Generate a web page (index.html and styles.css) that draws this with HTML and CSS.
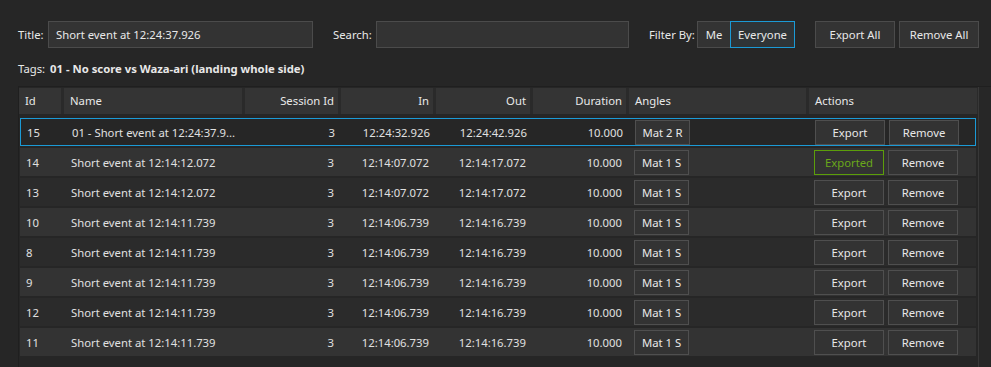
FILE: index.html
```html
<!DOCTYPE html>
<html lang="en">
<head>
    <meta charset="UTF-8">
    <meta name="viewport" content="width=device-width, initial-scale=1.0">
    <title>Events</title>
    <link rel="stylesheet" href="styles.css">
</head>
<body>
    <div class="toolbar">
        <label class="field-label title-label">Title:</label>
        <div class="text-box title-box">Short event at 12:24:37.926</div>
        <label class="field-label search-label">Search:</label>
        <div class="text-box search-box"></div>
        <label class="field-label filter-label">Filter By:</label>
        <div class="toggle">
            <button class="toggle-btn me-btn">Me</button>
            <button class="toggle-btn everyone-btn active">Everyone</button>
        </div>
        <button class="bar-btn export-all">Export All</button>
        <button class="bar-btn remove-all">Remove All</button>
    </div>

    <div class="tags">Tags: <b>01 - No score vs Waza-ari (landing whole side)</b></div>

    <div class="grid">
        <div class="grid-main">
            <div class="grid-row header">
                <div class="cell">Id</div>
                <div class="cell">Name</div>
                <div class="cell right">Session Id</div>
                <div class="cell right">In</div>
                <div class="cell right">Out</div>
                <div class="cell right">Duration</div>
                <div class="cell">Angles</div>
                <div class="cell">Actions</div>
            </div>

            <div class="grid-row item selected">
                <div class="cell">15</div>
                <div class="cell">01 - Short event at 12:24:37.9...</div>
                <div class="cell right">3</div>
                <div class="cell right">12:24:32.926</div>
                <div class="cell right">12:24:42.926</div>
                <div class="cell right">10.000</div>
                <div class="cell"><button class="angle-btn">Mat 2 R</button></div>
                <div class="cell actions"><button class="row-btn">Export</button><button class="row-btn">Remove</button></div>
            </div>
            <div class="grid-row item alt">
                <div class="cell">14</div>
                <div class="cell">Short event at 12:14:12.072</div>
                <div class="cell right">3</div>
                <div class="cell right">12:14:07.072</div>
                <div class="cell right">12:14:17.072</div>
                <div class="cell right">10.000</div>
                <div class="cell"><button class="angle-btn">Mat 1 S</button></div>
                <div class="cell actions"><button class="row-btn exported">Exported</button><button class="row-btn">Remove</button></div>
            </div>
            <div class="grid-row item">
                <div class="cell">13</div>
                <div class="cell">Short event at 12:14:12.072</div>
                <div class="cell right">3</div>
                <div class="cell right">12:14:07.072</div>
                <div class="cell right">12:14:17.072</div>
                <div class="cell right">10.000</div>
                <div class="cell"><button class="angle-btn">Mat 1 S</button></div>
                <div class="cell actions"><button class="row-btn">Export</button><button class="row-btn">Remove</button></div>
            </div>
            <div class="grid-row item alt">
                <div class="cell">10</div>
                <div class="cell">Short event at 12:14:11.739</div>
                <div class="cell right">3</div>
                <div class="cell right">12:14:06.739</div>
                <div class="cell right">12:14:16.739</div>
                <div class="cell right">10.000</div>
                <div class="cell"><button class="angle-btn">Mat 1 S</button></div>
                <div class="cell actions"><button class="row-btn">Export</button><button class="row-btn">Remove</button></div>
            </div>
            <div class="grid-row item">
                <div class="cell">8</div>
                <div class="cell">Short event at 12:14:11.739</div>
                <div class="cell right">3</div>
                <div class="cell right">12:14:06.739</div>
                <div class="cell right">12:14:16.739</div>
                <div class="cell right">10.000</div>
                <div class="cell"><button class="angle-btn">Mat 1 S</button></div>
                <div class="cell actions"><button class="row-btn">Export</button><button class="row-btn">Remove</button></div>
            </div>
            <div class="grid-row item alt">
                <div class="cell">9</div>
                <div class="cell">Short event at 12:14:11.739</div>
                <div class="cell right">3</div>
                <div class="cell right">12:14:06.739</div>
                <div class="cell right">12:14:16.739</div>
                <div class="cell right">10.000</div>
                <div class="cell"><button class="angle-btn">Mat 1 S</button></div>
                <div class="cell actions"><button class="row-btn">Export</button><button class="row-btn">Remove</button></div>
            </div>
            <div class="grid-row item">
                <div class="cell">12</div>
                <div class="cell">Short event at 12:14:11.739</div>
                <div class="cell right">3</div>
                <div class="cell right">12:14:06.739</div>
                <div class="cell right">12:14:16.739</div>
                <div class="cell right">10.000</div>
                <div class="cell"><button class="angle-btn">Mat 1 S</button></div>
                <div class="cell actions"><button class="row-btn">Export</button><button class="row-btn">Remove</button></div>
            </div>
            <div class="grid-row item alt">
                <div class="cell">11</div>
                <div class="cell">Short event at 12:14:11.739</div>
                <div class="cell right">3</div>
                <div class="cell right">12:14:06.739</div>
                <div class="cell right">12:14:16.739</div>
                <div class="cell right">10.000</div>
                <div class="cell"><button class="angle-btn">Mat 1 S</button></div>
                <div class="cell actions"><button class="row-btn">Export</button><button class="row-btn">Remove</button></div>
            </div>
        </div>
        <div class="scroll-track"></div>
    </div>
</body>
</html>
```

FILE: styles.css
```css
body {
    margin: 0;
    padding: 21px 0 0 18px;
    background: #262626;
    color: #e8e8e8;
    font-family: "Noto Sans", Arial, sans-serif;
    font-size: 11.3px;
    height: 346px;
    overflow: hidden;
}
button {
    font-family: inherit;
    font-size: 11.3px;
    color: #e8e8e8;
    cursor: pointer;
}
.toolbar {
    display: flex;
    align-items: center;
    height: 27px;
}
.field-label {
    white-space: nowrap;
}
.title-label {
    width: 30px;
}
.search-label {
    width: 43px;
    margin-left: 20px;
}
.filter-label {
    width: 48px;
    margin-left: 20px;
}
.text-box {
    height: 27px;
    box-sizing: border-box;
    background: #333333;
    border: 1px solid #4b4b4b;
    padding: 0 7px;
    line-height: 25px;
    white-space: nowrap;
}
.title-box {
    width: 265px;
}
.search-box {
    width: 253px;
}
.toggle {
    display: flex;
    height: 27px;
}
.toggle-btn {
    background: #333333;
    border: 1px solid #4b4b4b;
    padding: 0;
    height: 27px;
}
.me-btn {
    width: 33px;
    border-right: none;
}
.everyone-btn {
    width: 65px;
}
.toggle-btn.active {
    border-color: #1b9ad6;
    background: #2f3437;
}
.bar-btn {
    width: 80px;
    height: 27px;
    background: #333333;
    border: 1px solid #4b4b4b;
    padding: 0;
}
.export-all {
    margin-left: 20px;
}
.remove-all {
    margin-left: 4px;
}
.tags {
    margin-top: 13px;
    height: 16px;
    line-height: 16px;
}
.tags b {
    margin-left: 2px;
}
.grid {
    display: flex;
    margin-top: 9px;
    border-top: 1px solid #1f1f1f;
    border-left: 1px solid #1f1f1f;
    height: 280px;
}
.grid-main {
    width: 959px;
    padding-top: 1px;
}
.scroll-track {
    flex: 1;
    border-left: 1px solid #383838;
    background: #272727;
}
.grid-row {
    display: grid;
    grid-template-columns: 45px 181px 96px 95px 97px 96px 180px 168px;
    align-items: center;
}
.header {
    height: 26px;
    margin-bottom: 4px;
    background: #2a2a2a;
}
.header .cell {
    height: 26px;
    line-height: 26px;
    background: #343434;
    border-right: 3px solid #2a2a2a;
    padding: 0 4px 0 6px;
}
.header .cell:last-child {
    border-right: none;
}
.cell {
    box-sizing: border-box;
    padding: 0 7px;
    white-space: nowrap;
    overflow: hidden;
}
.right {
    text-align: right;
}
.item {
    height: 28px;
    margin: 0 1px 2px 1px;
    width: 956px;
    grid-template-columns: 44px 181px 96px 95px 97px 96px 180px 167px;
    background: #2b2b2b;
    box-sizing: border-box;
    color: #e0e0e0;
}
.item.alt {
    background: #333333;
}
.item.selected {
    background: #262626;
    border: 1px solid #1b9ad6;
}
.item .cell:first-child {
    padding-left: 6px;
}
.item .cell:nth-child(7) {
    padding-left: 5px;
}
.angle-btn {
    width: 55px;
    height: 25px;
    padding: 0;
    background: #333333;
    border: 1px solid #4f4f4f;
}
.actions {
    display: flex;
    gap: 4px;
    padding-left: 5px;
}
.row-btn {
    width: 70px;
    height: 25px;
    padding: 0;
    background: #333333;
    border: 1px solid #4f4f4f;
}
.row-btn.exported {
    color: #6aa81a;
    border-color: #5c9e0a;
}
```
